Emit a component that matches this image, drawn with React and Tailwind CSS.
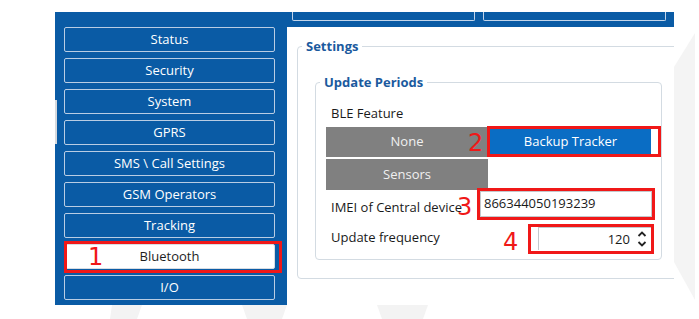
import React from "react";

const NAV = [
  "Status",
  "Security",
  "System",
  "GPRS",
  "SMS \\ Call Settings",
  "GSM Operators",
  "Tracking",
  "Bluetooth",
  "I/O",
];

function Mark({ children, className }) {
  return (
    <span
      className={`absolute z-20 font-['DejaVu_Sans',sans-serif] text-[24px] leading-none text-[#f01818] ${className}`}
    >
      {children}
    </span>
  );
}

function Watermark() {
  return (
    <svg className="absolute inset-0" width="699" height="319" viewBox="0 0 699 319">
      <polygon points="112,305 142,305 137,319 110,319" fill="#f3f3f3" />
      <polygon points="242,305 287,305 282,319 247,319" fill="#f3f3f3" />
      <polygon points="377,305 428,305 423,319 382,319" fill="#f3f3f3" />
      <polygon points="674,67 695,33 695,300 674,262" fill="#f4f4f4" />
    </svg>
  );
}

function Spinner() {
  return (
    <svg width="10" height="20" viewBox="0 0 10 20" fill="none" stroke="#222" strokeWidth="1.8">
      <polyline points="1.5,7 5,3.5 8.5,7" />
      <polyline points="1.5,13 5,16.5 8.5,13" />
    </svg>
  );
}

export default function App() {
  return (
    <div className="relative w-[699px] h-[319px] overflow-hidden bg-white font-['Open_Sans',sans-serif] text-[13px]">
      <Watermark />
      <div className="relative pt-[12px] pl-[55px]">
        <div className="relative flex w-[619px] h-[293px] bg-[#0a5ba5] overflow-hidden">
          {/* little strip of the window behind */}
          <div className="absolute left-0 top-[88px] w-[2px] h-[44px] bg-[#d6d9dd]" />

          {/* left nav */}
          <div className="w-[232px] shrink-0 pl-[9px] pt-[15px] flex flex-col gap-[6px]">
            {NAV.map((n) => {
              const active = n === "Bluetooth";
              return (
                <div key={n} className="relative w-[211px] h-[25px]">
                  <div
                    className={`h-full rounded-[2px] border flex items-center justify-center leading-none ${
                      active
                        ? "bg-white border-[#d8dde3] text-[#1e1e1e]"
                        : "border-[#b9cde4] text-white"
                    }`}
                  >
                    {n}
                  </div>
                  {active && (
                    <>
                      <div className="absolute left-0 top-[-3px] w-[218px] h-[32px] border-[3px] border-[#f01818]" />
                      <Mark className="left-[24px] top-[1px]">1</Mark>
                    </>
                  )}
                </div>
              );
            })}
          </div>

          {/* right side */}
          <div className="flex-1 min-w-0 flex flex-col">
            <div className="h-[15px] flex gap-[8px] pl-[5px] overflow-hidden">
              <div className="w-[183px] h-[9px] shrink-0 border border-t-0 border-[#c3d5ea] rounded-b-[2px]" />
              <div className="w-[183px] h-[9px] shrink-0 border border-t-0 border-[#c3d5ea] rounded-b-[2px]" />
              <div className="w-[183px] h-[9px] shrink-0 border border-t-0 border-[#c3d5ea] rounded-b-[2px]" />
            </div>

            <div className="flex-1 bg-white overflow-hidden pl-[10px] pt-[10px]">
              <fieldset className="w-[400px] h-[242px] border border-[#d3dbe2] rounded-[4px] p-0">
                <legend className="ml-[4px] px-[4px] font-bold text-[#1b5a9e] leading-[18px]">
                  Settings
                </legend>

                <fieldset className="ml-[17px] mt-[18px] w-[347px] h-[187px] border border-[#d3dbe2] rounded-[4px] p-0">
                  <legend className="ml-[4px] px-[4px] font-bold text-[#1b5a9e] leading-[18px]">
                    Update Periods
                  </legend>

                  <div className="mt-[13px] pl-[15px] leading-[18px] text-[#1a1a1a]">BLE Feature</div>

                  <div className="mt-[5px] ml-[10px] grid grid-cols-[162px_161px] grid-rows-[30px_31px] gap-[2px]">
                    <div className="bg-[#808080] text-[#f0f0f0] flex items-center justify-center">None</div>
                    <div className="relative bg-[#0a6dc4] text-white flex items-center justify-center">
                      Backup Tracker
                      <div className="absolute left-[-3px] top-[-1px] w-[174px] h-[31px] border-[3px] border-[#f01818]" />
                      <Mark className="left-[-22px] top-[4px]">2</Mark>
                    </div>
                    <div className="bg-[#808080] text-[#f0f0f0] flex items-center justify-center">Sensors</div>
                  </div>

                  <div className="relative z-10 mt-[-1px] h-[30px] flex items-center pl-[15px] text-[#1a1a1a]">
                    <div className="w-[149px] pt-[6px] leading-[18px]">IMEI of Central device</div>
                    <div className="relative w-[172px] h-[26px] border border-[#c4c8cc] bg-white flex items-center px-[3px]">
                      866344050193239
                      <div className="absolute left-[-4px] top-[-4px] w-[178px] h-[32px] border-[3px] border-[#f01818]" />
                      <Mark className="left-[-24px] top-[3px]">3</Mark>
                    </div>
                  </div>

                  <div className="h-[33px] flex items-start pl-[15px] text-[#1a1a1a]">
                    <div className="w-[207px] mt-[9px] leading-[18px]">Update frequency</div>
                    <div className="relative mt-[8px] w-[113px] h-[23px] border-l border-t border-[#c4c8cc] bg-white flex items-center justify-end pr-[4px] gap-[7px]">
                      <span className="leading-none">120</span>
                      <Spinner />
                      <div className="absolute left-[-11px] top-[-4px] w-[126px] h-[30px] border-[3px] border-[#f01818]" />
                      <Mark className="left-[-36px] top-[2px]">4</Mark>
                    </div>
                  </div>
                </fieldset>
              </fieldset>
            </div>
          </div>
        </div>
      </div>
    </div>
  );
}
